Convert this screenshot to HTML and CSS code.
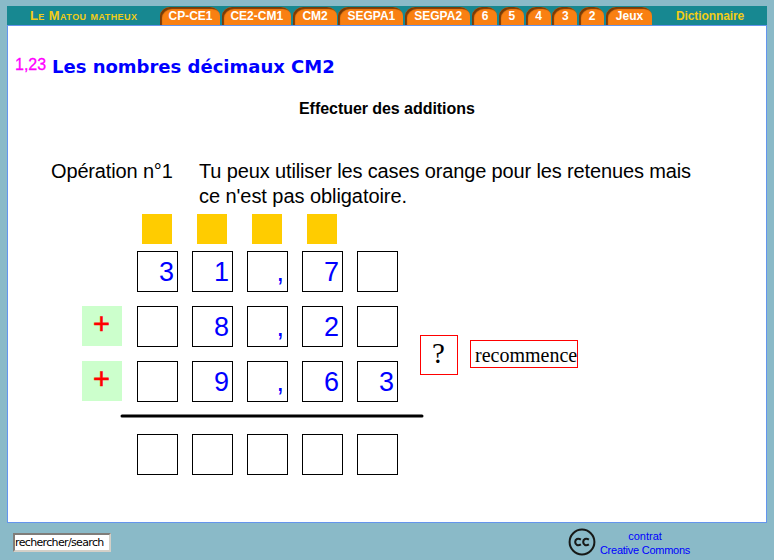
FILE: index.html
```
<!DOCTYPE html>
<html lang="fr">
<head>
<meta charset="utf-8">
<title>Le Matou matheux</title>
<link rel="stylesheet" href="styles.css">
</head>
<body>
<header class="topbar">
  <a class="brand">Le Matou matheux</a>
  <nav class="tabs">
    <a class="tab w60">CP-CE1</a><a class="tab w70">CE2-CM1</a><a class="tab w45">CM2</a><a class="tab w65">SEGPA1</a><a class="tab w66">SEGPA2</a><a class="tab">6</a><a class="tab">5</a><a class="tab">4</a><a class="tab">3</a><a class="tab">2</a><a class="tab w46">Jeux</a>
  </nav>
  <a class="dictionary">Dictionnaire</a>
</header>
<main class="panel">
  <div class="heading"><span class="number">1,23</span><h1>Les nombres décimaux CM2</h1></div>
  <h2>Effectuer des additions</h2>
  <div class="intro">
    <p class="operation">Opération n°1</p>
    <p class="advice"><span class="line1">Tu peux utiliser les cases orange pour les retenues mais</span><br>ce n'est pas obligatoire.</p>
  </div>
  <div class="exercise">
    <div class="sum">
      <div class="row carries"><i></i><i></i><i></i><i></i></div>
      <div class="row"><b></b><span>3</span><span>1</span><span>,</span><span>7</span><span></span></div>
      <div class="row"><b class="plus">+</b><span></span><span>8</span><span>,</span><span>2</span><span></span></div>
      <div class="row"><b class="plus">+</b><span></span><span>9</span><span>,</span><span>6</span><span>3</span></div>
      <svg class="rule" width="304" height="4" viewBox="0 0 304 4"><path d="M2 2H302" stroke="#000" stroke-width="3" stroke-linecap="round"/></svg>
      <div class="row result"><b></b><span></span><span></span><span></span><span></span><span></span></div>
    </div>
    <div class="actions"><a class="check">?</a><a class="restart">recommence</a></div>
  </div>
</main>
<footer>
  <input class="search" value="rechercher/search" aria-label="rechercher">
  <div class="license">
    <svg width="28" height="28" viewBox="0 0 28 28" fill="none" stroke="#171917"><circle cx="14" cy="14" r="12.4" stroke-width="2"/><path d="M12.9 11.6C10 9.7 7.2 11 7.2 14s2.8 4.3 5.7 2.4M20.9 11.6c-2.9-1.9-5.7-.6-5.7 2.4s2.8 4.3 5.7 2.4" stroke-width="2.1"/></svg>
    <p>contrat<br><span>Creative Commons</span></p>
  </div>
</footer>
</body>
</html>
```
FILE: styles.css
```
* { box-sizing: border-box; }
body { margin: 0; padding: 6px 7px 0; height: 560px; overflow: hidden; background: #8abac8; font-family: "Liberation Sans", Arial, sans-serif; }
h1, h2, p { margin: 0; }
.topbar { display: flex; width: 760px; height: 19px; background: #178891; font-size: 12px; font-weight: bold; line-height: 20px; color: #f2cc16; }
.brand { width: 153px; padding-left: 23px; font-size: 13px; font-variant: small-caps; letter-spacing: .43px; font-weight: bold; white-space: nowrap; }
.tabs { display: flex; justify-content: space-between; width: 492px; padding-top: 1px; color: #fff; line-height: 18px; }
.tab { width: 25px; height: 18px; text-align: center; background: #f98012; border-radius: 10px 10px 0 0 / 9px 9px 0 0; box-shadow: inset 2px 2px 1px #783b08; padding-left: 1px; }
.w60 { width: 60px; }
.w70 { width: 69px; }
.w45 { width: 44px; }
.w65 { width: 65px; }
.w66 { width: 65px; }
.w46 { width: 46px; }
.dictionary { margin-left: 24px; font-weight: bold; letter-spacing: -.1px; }
.panel { width: 760px; height: 498px; background: #fff; border: 1px solid #6495ed; }
.heading { display: flex; height: 74px; padding: 28px 0 0 7px; }
.number { width: 37px; color: #f0f; font-size: 16px; line-height: 22px; -webkit-text-stroke: .3px #f0f; }
h1 { color: #00f; font: bold 18px/26px "DejaVu Sans", Verdana, sans-serif; white-space: nowrap; }
h2 { height: 59px; padding-left: 291px; font-size: 16px; line-height: 18px; letter-spacing: -.05px; }
.intro { display: flex; height: 55px; font-size: 20px; line-height: 25px; white-space: nowrap; }
.operation { width: 191px; padding-left: 43px; letter-spacing: -.15px; }
.line1 { letter-spacing: -.135px; }
.advice { letter-spacing: -.06px; }
.exercise { display: flex; }
.sum { width: 412px; }
.row { display: flex; gap: 14px; height: 55px; padding-left: 74px; }
.carries { gap: 25px; height: 37px; padding-left: 134px; }
.carries i { width: 30px; height: 30px; background: #fc0; }
.row b { width: 41px; }
.row .plus { width: 40px; height: 40px; margin-right: 1px; background: #cfc; color: red; text-align: center; font-size: 29px; font-weight: normal; line-height: 37px; -webkit-text-stroke: .6px red; padding-right: 1px; }
.row span { width: 41px; height: 41px; padding-right: 3px; border: 1px solid #000; color: #00f; font-size: 27px; line-height: 41px; text-align: right; }
.rule { display: block; margin: -2px 0 16px 112px; }
.actions { display: flex; align-items: flex-start; gap: 12px; height: 40px; margin-top: 121px; color: #000; font-family: "Liberation Serif", "Times New Roman", serif; }
.check { width: 38px; height: 40px; border: 1px solid red; text-align: center; font-size: 29px; line-height: 35px; padding-right: 1px; }
.restart { width: 108px; height: 28px; margin-top: 5px; padding-left: 4px; border: 1px solid red; font-size: 20px; line-height: 28px; }
footer { display: flex; padding: 5px 0 0 6px; }
.search { width: 98px; height: 19px; margin: 5px 0 0; padding: 0; border: 2px inset #d4d0c8; font: 11px/15px "DejaVu Sans", Tahoma, sans-serif; letter-spacing: -.65px; }
.license { display: flex; margin-left: 457px; }
.license p { width: 98px; text-align: center; color: #00f; font-size: 11px; line-height: 14px; padding-top: 1px; white-space: nowrap; }
.license span { letter-spacing: -.25px; }
```
